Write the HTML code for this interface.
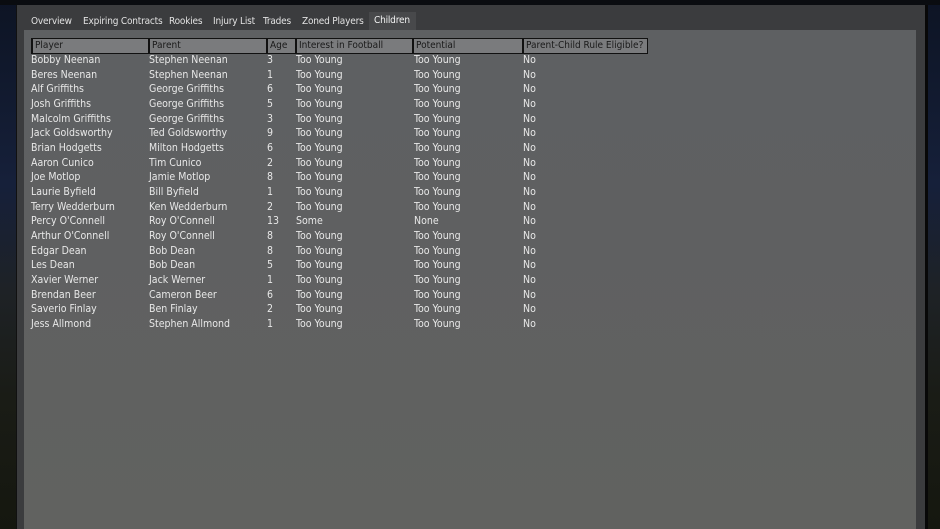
<!DOCTYPE html>
<html><head><meta charset="utf-8"><style>
body{margin:0;width:940px;height:529px;overflow:hidden;background:linear-gradient(180deg,#0d1424 0%,#16203a 35%,#1e2226 55%,#1a1c16 75%,#15170f 100%);font-family:"DejaVu Sans Condensed","Liberation Sans",sans-serif;position:relative}
.topbar{position:absolute;left:0;top:0;width:940px;height:5px;background:#0a0c10}
.panel{position:absolute;left:16px;top:5px;width:908px;height:524px;background:#3b3c3e;border-right:3px solid #080808;border-left:1px solid #111}
.inner{position:absolute;left:24px;top:30px;width:892px;height:499px;background:linear-gradient(180deg,#5e6062 0%,#5f6061 40%,#616260 100%)}
.t{position:absolute;top:16px;font-size:10px;letter-spacing:-0.2px;color:#e2e2e2;white-space:nowrap}
.sel{position:absolute;left:369px;top:12px;width:47px;height:18px;background:#48494b}
.h{position:absolute;top:38px;height:16px;background:#7a7b7d;border:1px solid #111;box-sizing:border-box;font-size:10px;color:#1a1a1a;padding-left:2px;line-height:13px;border-left-width:2px}
.r{position:absolute;font-size:10.5px;color:#e8e8e8;white-space:nowrap}
</style></head><body>
<div class="topbar"></div>
<div class="panel"></div>
<div class="inner"></div>
<div class="sel"></div>
<span class="t" style="left:31px">Overview</span>
<span class="t" style="left:83px">Expiring Contracts</span>
<span class="t" style="left:169px">Rookies</span>
<span class="t" style="left:213px">Injury List</span>
<span class="t" style="left:263px">Trades</span>
<span class="t" style="left:302px">Zoned Players</span>
<span class="t" style="left:374px;top:15px;color:#f2f2f2">Children</span>
<div class="h" style="left:31px;width:118px">Player</div>
<div class="h" style="left:148px;width:119px">Parent</div>
<div class="h" style="left:266px;width:30px">Age</div>
<div class="h" style="left:295px;width:118px">Interest in Football</div>
<div class="h" style="left:412px;width:111px">Potential</div>
<div class="h" style="left:522px;width:126px">Parent-Child Rule Eligible?</div>
<div class="r" style="left:31px;top:53px;line-height:14.67px">Bobby Neenan<br>Beres Neenan<br>Alf Griffiths<br>Josh Griffiths<br>Malcolm Griffiths<br>Jack Goldsworthy<br>Brian Hodgetts<br>Aaron Cunico<br>Joe Motlop<br>Laurie Byfield<br>Terry Wedderburn<br>Percy O'Connell<br>Arthur O'Connell<br>Edgar Dean<br>Les Dean<br>Xavier Werner<br>Brendan Beer<br>Saverio Finlay<br>Jess Allmond</div>
<div class="r" style="left:149px;top:53px;line-height:14.67px">Stephen Neenan<br>Stephen Neenan<br>George Griffiths<br>George Griffiths<br>George Griffiths<br>Ted Goldsworthy<br>Milton Hodgetts<br>Tim Cunico<br>Jamie Motlop<br>Bill Byfield<br>Ken Wedderburn<br>Roy O'Connell<br>Roy O'Connell<br>Bob Dean<br>Bob Dean<br>Jack Werner<br>Cameron Beer<br>Ben Finlay<br>Stephen Allmond</div>
<div class="r" style="left:267px;top:53px;line-height:14.67px">3<br>1<br>6<br>5<br>3<br>9<br>6<br>2<br>8<br>1<br>2<br>13<br>8<br>8<br>5<br>1<br>6<br>2<br>1</div>
<div class="r" style="left:296px;top:53px;line-height:14.67px">Too Young<br>Too Young<br>Too Young<br>Too Young<br>Too Young<br>Too Young<br>Too Young<br>Too Young<br>Too Young<br>Too Young<br>Too Young<br>Some<br>Too Young<br>Too Young<br>Too Young<br>Too Young<br>Too Young<br>Too Young<br>Too Young</div>
<div class="r" style="left:414px;top:53px;line-height:14.67px">Too Young<br>Too Young<br>Too Young<br>Too Young<br>Too Young<br>Too Young<br>Too Young<br>Too Young<br>Too Young<br>Too Young<br>Too Young<br>None<br>Too Young<br>Too Young<br>Too Young<br>Too Young<br>Too Young<br>Too Young<br>Too Young</div>
<div class="r" style="left:523px;top:53px;line-height:14.67px">No<br>No<br>No<br>No<br>No<br>No<br>No<br>No<br>No<br>No<br>No<br>No<br>No<br>No<br>No<br>No<br>No<br>No<br>No</div>
</body></html>
